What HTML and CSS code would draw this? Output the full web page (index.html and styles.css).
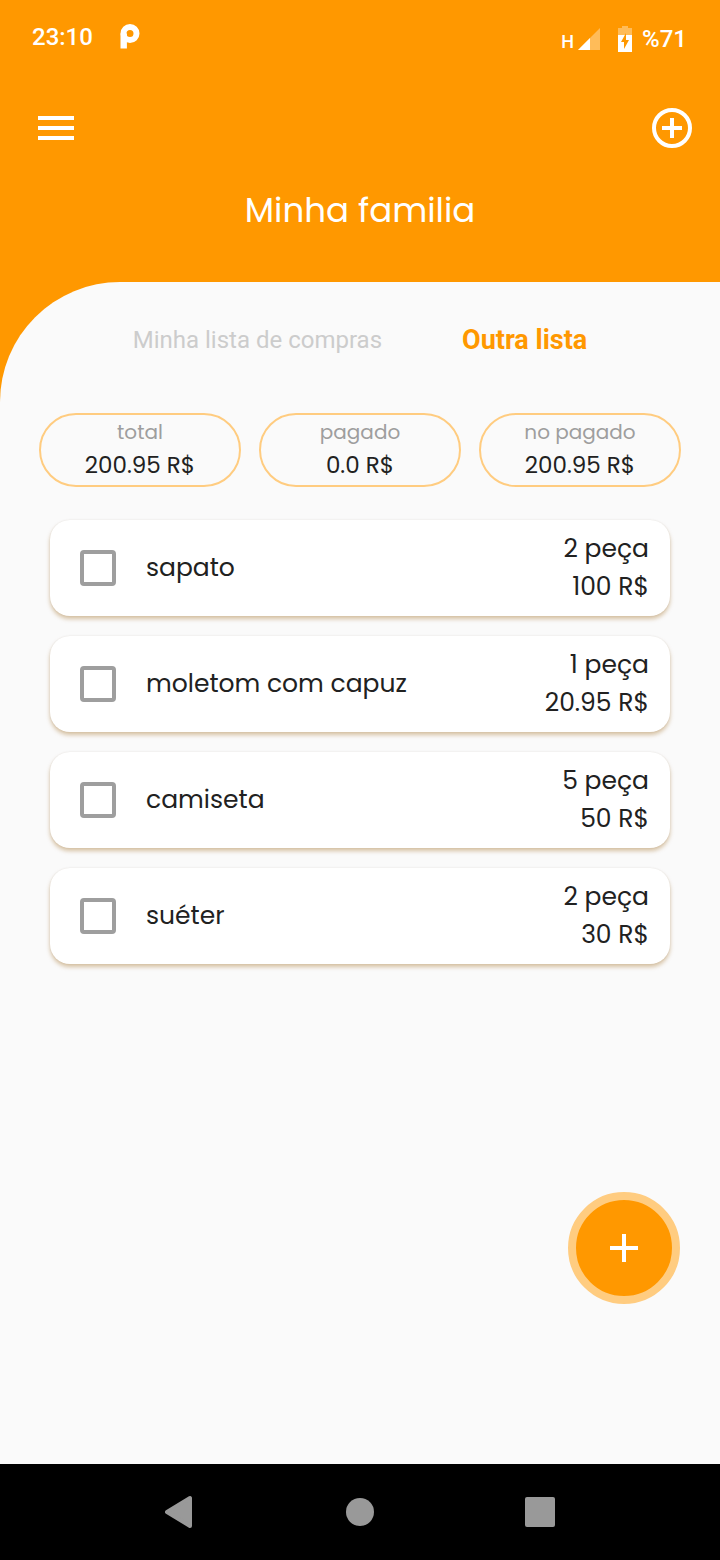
FILE: index.html
```html
<!DOCTYPE html>
<html lang="pt">
<head>
  <meta charset="UTF-8" />
  <meta name="viewport" content="width=device-width, initial-scale=1.0"/>
  <title>Minha familia</title>
  <link rel="stylesheet" href="styles.css">
</head>
<body>

<header class="header">
  <div class="status-bar">
    <div class="status-left">
      <span>23:10</span>
      <svg width="20" height="26" viewBox="0 0 20 26" aria-hidden="true">
        <circle cx="10" cy="9.5" r="6.5" fill="none" stroke="#fff" stroke-width="6"/>
        <path d="M0.500 9.500h6.400V24.500H0.500z" fill="#fff"/>
      </svg>
    </div>
    <div class="status-right">
      <span class="network">H</span>
      <svg class="signal" width="22" height="22" viewBox="0 0 22 22" aria-hidden="true">
        <path d="M22 0v22H0z" fill="#fff" opacity=".35"/>
        <path d="M12 10v12H0z" fill="#fff"/>
      </svg>
      <svg class="battery" width="14" height="26" viewBox="0 0 14 26" aria-hidden="true">
        <path d="M4 0h6v2h4v7H0V2h4z" fill="#fff" opacity=".35"/>
        <path d="M0 9h14v17H0z" fill="#fff"/>
        <path d="M8 7v7h3l-5 9v-7H3z" fill="#ff9800"/>
      </svg>
      <span>%71</span>
    </div>
  </div>

  <div class="toolbar">
    <button class="icon-btn" type="button" aria-label="Menu">
      <svg width="36" height="24" viewBox="0 0 36 24"><path d="M0 0h36v4H0zM0 10h36v4H0zM0 20h36v4H0z" fill="#fff"/></svg>
    </button>
    <button class="icon-btn" type="button" aria-label="Nova lista">
      <svg width="40" height="40" viewBox="0 0 40 40" fill="none" stroke="#fff" stroke-width="4">
        <circle cx="20" cy="20" r="18"/>
        <path d="M20 10v20M10 20h20"/>
      </svg>
    </button>
  </div>

  <h1 class="title">Minha familia</h1>
</header>

<div class="sheet-wrap">
  <main class="sheet">
    <div class="tabs">
      <button class="tab" type="button">Minha lista de compras</button>
      <button class="tab active" type="button">Outra lista</button>
    </div>

    <div class="totals">
      <div class="total-box">
        <span class="total-label">total</span>
        <span class="total-value">200.95 R$</span>
      </div>
      <div class="total-box">
        <span class="total-label">pagado</span>
        <span class="total-value">0.0 R$</span>
      </div>
      <div class="total-box">
        <span class="total-label">no pagado</span>
        <span class="total-value">200.95 R$</span>
      </div>
    </div>

    <ul class="items">
      <li class="item">
        <input type="checkbox" id="item1" />
        <label for="item1">sapato</label>
        <div class="amount"><span>2 peça</span><span>100 R$</span></div>
      </li>
      <li class="item">
        <input type="checkbox" id="item2" />
        <label for="item2">moletom com capuz</label>
        <div class="amount"><span>1 peça</span><span>20.95 R$</span></div>
      </li>
      <li class="item">
        <input type="checkbox" id="item3" />
        <label for="item3">camiseta</label>
        <div class="amount"><span>5 peça</span><span>50 R$</span></div>
      </li>
      <li class="item">
        <input type="checkbox" id="item4" />
        <label for="item4">suéter</label>
        <div class="amount"><span>2 peça</span><span>30 R$</span></div>
      </li>
    </ul>

    <button class="add-btn" type="button" aria-label="Adicionar">
      <svg width="28" height="28" viewBox="0 0 28 28"><path d="M12 0h4v12h12v4H16v12h-4V16H0v-4h12z" fill="#fff"/></svg>
    </button>
  </main>
</div>

<nav class="nav-bar">
  <button class="icon-btn" type="button" aria-label="Voltar">
    <svg width="30" height="34" viewBox="0 0 30 34"><path d="M2 17L25 3v28z" fill="#999" stroke="#999" stroke-width="4" stroke-linejoin="round"/></svg>
  </button>
  <button class="icon-btn" type="button" aria-label="Início">
    <svg width="30" height="30" viewBox="0 0 30 30"><circle cx="15" cy="15" r="14" fill="#999"/></svg>
  </button>
  <button class="icon-btn" type="button" aria-label="Recentes">
    <svg width="30" height="30" viewBox="0 0 30 30"><rect width="30" height="30" rx="2" fill="#999"/></svg>
  </button>
</nav>

</body>
</html>
```
FILE: styles.css
```css
* {
  box-sizing: border-box;
}

body {
  margin: 0;
  min-height: 100vh;
  display: flex;
  flex-direction: column;
  background: #fafafa;
  color: #212121;
  font-family: Poppins, Inter, sans-serif;
}

button {
  border: none;
  background: none;
  padding: 0;
  cursor: pointer;
}

svg {
  display: block;
}

.header {
  background: #ff9800;
  color: white;
  padding-bottom: 46px;
}

.status-bar {
  display: flex;
  justify-content: space-between;
  height: 72px;
  padding: 24px 33px 0 32px;
  font: 500 24px/26px Roboto, sans-serif;
}

.status-left {
  display: flex;
  align-items: flex-start;
  gap: 27px;
}

.status-right {
  display: flex;
  align-items: flex-end;
  height: 28px;
}

.network {
  font-size: 18px;
  line-height: 20px;
}

.signal {
  margin: 0 18px 2px 4px;
}

.battery {
  margin-right: 10px;
}

.toolbar {
  display: flex;
  justify-content: space-between;
  align-items: center;
  height: 112px;
  padding: 0 28px 0 38px;
}

.title {
  margin: 0;
  text-align: center;
  font-size: 34px;
  line-height: 52px;
  font-weight: 400;
}

.sheet-wrap {
  flex: 1;
  display: flex;
  background: linear-gradient(#ff9800 120px, #fafafa 120px);
}

.sheet {
  flex: 1;
  display: flex;
  flex-direction: column;
  background: #fafafa;
  border-top-left-radius: 120px;
}

.tabs {
  display: flex;
  justify-content: center;
  align-items: center;
  gap: 80px;
  height: 116px;
}

.tab {
  font: 24px Roboto, sans-serif;
  color: #ccc;
}

.tab.active {
  color: #ff9800;
  font-size: 27px;
  font-weight: bold;
}

.totals {
  display: flex;
  gap: 18px;
  padding: 15px 39px 0;
}

.total-box {
  flex: 1;
  display: flex;
  flex-direction: column;
  align-items: center;
  height: 74px;
  border: 2px solid #ffcc80;
  border-radius: 37px;
}

.total-label {
  color: #9e9e9e;
  font-size: 20px;
  line-height: 34px;
}

.total-value {
  font-size: 23px;
  line-height: 32px;
}

.items {
  list-style: none;
  margin: 33px 50px 40px;
  padding: 0;
  display: flex;
  flex-direction: column;
  gap: 20px;
}

.item {
  display: flex;
  align-items: center;
  min-height: 96px;
  padding: 10px 21px 10px 30px;
  background: white;
  border-radius: 20px;
  box-shadow: 0 3px 4px rgba(150, 90, 0, 0.35), 0 0 2px rgba(0, 0, 0, 0.08);
  font-size: 25px;
  line-height: 38px;
}

.item input {
  appearance: none;
  width: 36px;
  height: 36px;
  margin: 0 30px 0 0;
  border: 4px solid #9e9e9e;
  border-radius: 4px;
}

.item input:checked {
  background: #ff9800;
  border-color: #ff9800;
}

.item label {
  flex: 1;
}

.amount {
  display: flex;
  flex-direction: column;
  align-items: flex-end;
}

.add-btn {
  display: flex;
  justify-content: center;
  align-items: center;
  align-self: flex-end;
  width: 112px;
  height: 112px;
  margin: auto 40px 160px;
  background: #ff9800;
  border: 8px solid #ffcc80;
  border-radius: 50%;
}

.nav-bar {
  display: flex;
  justify-content: space-between;
  align-items: center;
  height: 96px;
  padding: 0 165px;
  background: black;
}
```
